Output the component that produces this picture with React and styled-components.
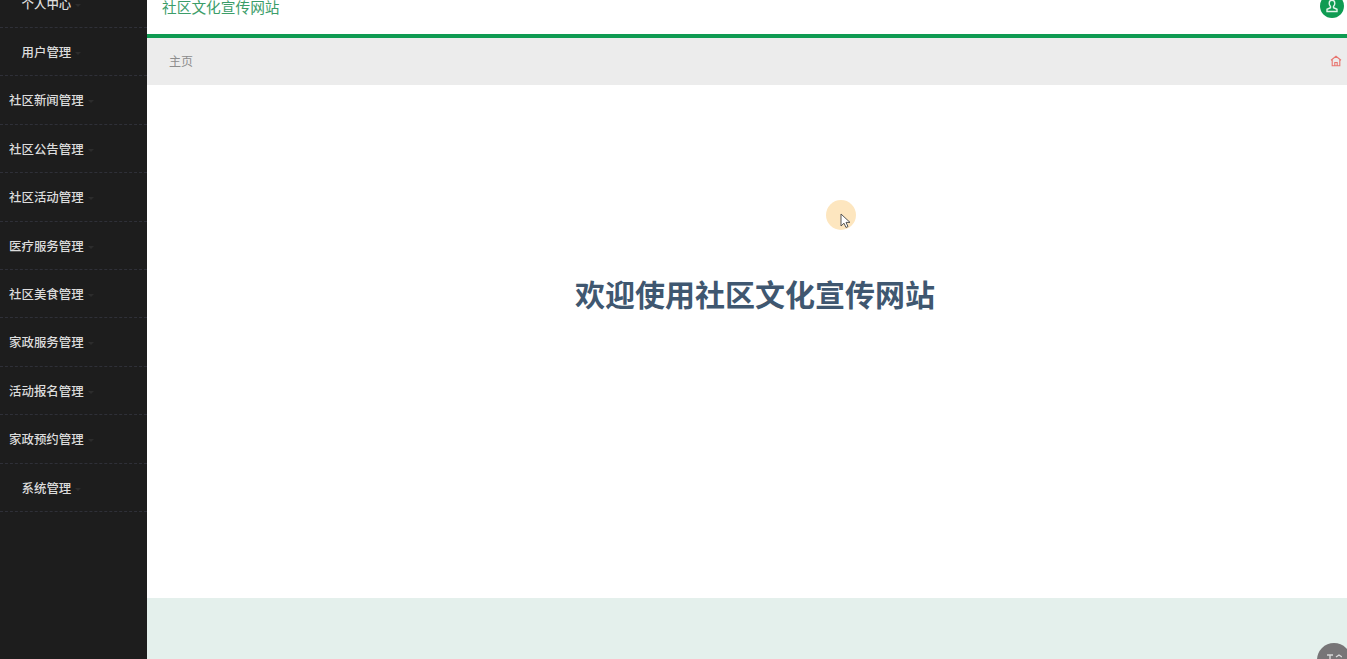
import React from 'react';
import styled, { createGlobalStyle } from 'styled-components';

const menus = [
	{ name: '个人中心', inset: true },
	{ name: '用户管理', inset: true },
	{ name: '社区新闻管理' },
	{ name: '社区公告管理' },
	{ name: '社区活动管理' },
	{ name: '医疗服务管理' },
	{ name: '社区美食管理' },
	{ name: '家政服务管理' },
	{ name: '活动报名管理' },
	{ name: '家政预约管理' },
	{ name: '系统管理', inset: true },
];

const GlobalStyle = createGlobalStyle`
	html, body {
		margin: 0;
		height: 100%;
		overflow: hidden;
		background: #fff;
		font-family: 'Noto Sans CJK SC', 'Liberation Sans', sans-serif;
	}
	#root {
		height: 100%;
	}
`;

const Page = styled.div`
	position: relative;
	display: flex;
	width: 1347px;
	height: 659px;
	overflow: hidden;
`;

const Sidebar = styled.aside`
	flex: 0 0 147px;
	background: #1d1d1d;
	overflow: hidden;
`;

const Menu = styled.ul`
	list-style: none;
	margin: -20.4px 0 0;
	padding: 0;
`;

const MenuItem = styled.li`
	height: 48.4px;
	box-sizing: border-box;
	padding-left: ${(p) => (p.$inset ? '21.5px' : '9px')};
	border-bottom: 1px dashed #2f3038;
	color: #dcdcdc;
	font-size: 12.45px;
	font-weight: 500;
	line-height: 48.6px;
	white-space: nowrap;

	&::after {
		content: '';
		display: inline-block;
		margin: 0 0 2px 4px;
		border: 3px solid transparent;
		border-top-color: #2c2c2c;
		border-bottom-width: 0;
	}
`;

const Main = styled.main`
	flex: 1;
	display: flex;
	flex-direction: column;
	min-width: 0;
`;

const Header = styled.header`
	flex: 0 0 38px;
	box-sizing: border-box;
	display: flex;
	justify-content: space-between;
	align-items: flex-start;
	padding: 0 3px 0 15px;
	border-bottom: 4px solid #0f9b52;
	background: #fff;
	overflow: hidden;
`;

const Title = styled.div`
	margin-top: -4px;
	color: #3c9d69;
	font-size: 14.7px;
	line-height: 22px;
`;

const Avatar = styled.div`
	width: 24px;
	height: 24px;
	margin-top: -6px;
	border-radius: 50%;
	background: #0f9b52;
	display: flex;
	align-items: center;
	justify-content: center;
`;

const Crumbs = styled.nav`
	flex: 0 0 47px;
	display: flex;
	align-items: center;
	justify-content: space-between;
	padding: 0 5px 2px 22px;
	box-sizing: border-box;
	background: #ececec;
	color: #8d8d8d;
	font-size: 12px;
`;

const Content = styled.section`
	flex: 1;
	display: flex;
	align-items: flex-start;
	justify-content: center;
	padding: 185px 0 0 16px;
	background: #fff;
`;

const Welcome = styled.h1`
	margin: 0;
	color: #3f5770;
	font-size: 30px;
	font-weight: 700;
	line-height: 46px;
`;

const Footer = styled.footer`
	flex: 0 0 61px;
	background: #e4f0ec;
`;

const ToTop = styled.div`
	position: absolute;
	left: 1317px;
	top: 643px;
	width: 34px;
	height: 34px;
	border-radius: 50%;
	background: #777577;
	display: flex;
	justify-content: center;
	padding-top: 11px;
	box-sizing: border-box;
`;

const CursorMark = styled.div`
	position: absolute;
	left: 826px;
	top: 200px;
	width: 30px;
	height: 30px;
	border-radius: 50%;
	background: #fde6bf;
`;

const Arrow = styled.svg`
	position: absolute;
	left: 14px;
	top: 13px;
`;

const App = () => (
	<Page>
		<GlobalStyle />
		<Sidebar>
			<Menu>
				{menus.map((m) => (
					<MenuItem key={m.name} $inset={m.inset}>
						{m.name}
					</MenuItem>
				))}
			</Menu>
		</Sidebar>
		<Main>
			<Header>
				<Title>社区文化宣传网站</Title>
				<Avatar>
					<svg width="14" height="14" viewBox="0 0 14 14" fill="none" stroke="#e3f5ea" strokeWidth="1.4">
						<path d="M7 1.200c-1.800 0-2.800 1.300-2.800 3 0 1.400.5 2.500 1.300 3.200v1.300L2 10.300v2.200h10v-2.200L8.500 8.700V7.400c.8-.7 1.300-1.800 1.300-3.200 0-1.700-1-3-2.800-3z" />
					</svg>
				</Avatar>
			</Header>
			<Crumbs>
				<span>主页</span>
				<svg width="12" height="12" viewBox="0 0 12 12" fill="none" stroke="#e8756f" strokeWidth="1.1">
					<path d="M1 5.200 6 1.200l5 4M2.200 4.500v6.300h7.600V4.500M4.800 10.800V7.500h2.400v3.300" />
				</svg>
			</Crumbs>
			<Content>
				<Welcome>欢迎使用社区文化宣传网站</Welcome>
			</Content>
			<Footer />
		</Main>
		<CursorMark>
			<Arrow width="11" height="16" viewBox="0 0 11 16">
				<path d="M1 1v12l3-2.800 2 4.300 2-1-2-4.100h4z" fill="#fff" stroke="#555" strokeWidth="1" />
			</Arrow>
		</CursorMark>
		<ToTop>
			<svg width="16" height="6" viewBox="0 0 16 6" fill="none" stroke="#d8d8d8" strokeWidth="1.400">
				<path d="M1 1h6M4 1v5M10 3l3-2 3 2" />
			</svg>
		</ToTop>
	</Page>
);

export default App;
